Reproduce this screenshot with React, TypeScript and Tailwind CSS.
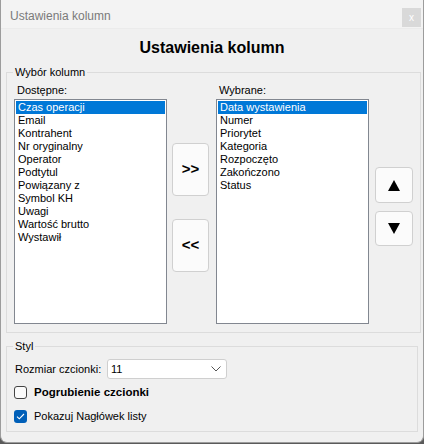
import React from "react";

const available = [
  "Czas operacji",
  "Email",
  "Kontrahent",
  "Nr oryginalny",
  "Operator",
  "Podtytul",
  "Powiązany z",
  "Symbol KH",
  "Uwagi",
  "Wartość brutto",
  "Wystawił",
];

const chosen = [
  "Data wystawienia",
  "Numer",
  "Priorytet",
  "Kategoria",
  "Rozpoczęto",
  "Zakończono",
  "Status",
];

function ListBox({ items }: { items: string[] }) {
  return (
    <div className="w-[153px] h-[225px] border border-[#828790] bg-white p-[1px]">
      {items.map((it, i) => (
        <div
          key={it}
          className={
            i === 0
              ? "h-[13px] leading-[13px] text-[11px] pl-[2px] bg-[#0078d7] text-white whitespace-nowrap"
              : "h-[13px] leading-[13px] text-[11px] pl-[2px] text-black whitespace-nowrap"
          }
        >
          {it}
        </div>
      ))}
    </div>
  );
}

export default function App() {
  return (
    <div className="w-[424px] h-[444px] bg-[#5a5a5a] font-['Liberation_Sans',Arial,sans-serif]">
      <div className="w-[424px] h-[443px] bg-[#f0f0f0] border-x border-b border-[#9c9c9c] rounded-b-[7px] flex flex-col overflow-hidden">
        {/* Title bar */}
        <div className="h-[29px] bg-[#f3f3f3] flex justify-between pl-[9px] pr-[2px] border-b border-[#ebebeb]">
          <span className="text-[12px] leading-[14px] mt-[9px] text-[#7a7a7a]">Ustawienia kolumn</span>
          <div className="mt-[8px] w-[19px] h-[19px] bg-[#d9d9d9] flex items-center justify-center text-white text-[10px] leading-none">
            x
          </div>
        </div>

        {/* Header */}
        <div className="h-[37px] flex items-center justify-center">
          <span className="text-[16px] font-bold text-black">Ustawienia kolumn</span>
        </div>

        {/* Group: Wybór kolumn */}
        <fieldset className="mx-[5px] border border-[#dcdcdc] px-[7px] pb-[8px]">
          <legend className="ml-[-1px] px-[2px] text-[11px] leading-[13px] text-black">Wybór kolumn</legend>
          <div className="flex mt-[5px]">
            <div className="flex flex-col gap-[2px]">
              <span className="text-[11px] leading-[13px] pl-[3px] text-black">Dostępne:</span>
              <ListBox items={available} />
            </div>
            <div className="ml-[5px] w-[37px] flex flex-col gap-[23px] pt-[59px]">
              <button className="h-[53px] w-[37px] rounded-[4px] border border-[#d0d0d0] bg-[#fbfbfb] text-[15px] font-bold text-black">
                &gt;&gt;
              </button>
              <button className="h-[53px] w-[37px] rounded-[4px] border border-[#d0d0d0] bg-[#fbfbfb] text-[15px] font-bold text-black">
                &lt;&lt;
              </button>
            </div>
            <div className="ml-[7px] flex flex-col gap-[2px]">
              <span className="text-[11px] leading-[13px] pl-[3px] text-black">Wybrane:</span>
              <ListBox items={chosen} />
            </div>
            <div className="ml-[6px] w-[38px] flex flex-col gap-[8px] pt-[83px]">
              <button className="h-[36px] w-[38px] rounded-[4px] border border-[#d0d0d0] bg-[#fbfbfb] flex items-center justify-center">
                <svg width="12" height="11" viewBox="0 0 12 11">
                  <path d="M6 0 L12 11 L0 11 Z" fill="black" />
                </svg>
              </button>
              <button className="h-[35px] w-[38px] rounded-[4px] border border-[#d0d0d0] bg-[#fbfbfb] flex items-center justify-center">
                <svg width="12" height="11" viewBox="0 0 12 11">
                  <path d="M0 0 L12 0 L6 11 Z" fill="black" />
                </svg>
              </button>
            </div>
          </div>
        </fieldset>

        {/* Group: Styl */}
        <fieldset className="mx-[5px] mt-[7px] border border-[#dcdcdc] px-[7px] pb-[8px]">
          <legend className="ml-[-1px] px-[2px] text-[11px] leading-[13px] text-black">Styl</legend>
          <div className="flex items-center mt-[6px] pl-[1px]">
            <span className="text-[11px] text-black w-[92px]">Rozmiar czcionki:</span>
            <div className="w-[120px] h-[20px] bg-white border border-[#cfcfcf] rounded-[3px] flex items-center justify-between pl-[3px] pr-[5px]">
              <span className="text-[11px] text-black">11</span>
              <svg width="10" height="6" viewBox="0 0 10 6" fill="none">
                <path d="M0.5 0.5 L5 5 L9.5 0.5" stroke="#555" strokeWidth="1" />
              </svg>
            </div>
          </div>
          <div className="flex items-center mt-[7px] h-[13px]">
            <div className="w-[13px] h-[13px] rounded-[3px] border border-[#444] bg-[#fbfbfb]" />
            <span className="ml-[7px] text-[11.5px] font-bold text-black">Pogrubienie czcionki</span>
          </div>
          <div className="flex items-center mt-[11px] h-[13px]">
            <div className="w-[13px] h-[13px] rounded-[3px] bg-[#005fb8] flex items-center justify-center">
              <svg width="9" height="7" viewBox="0 0 9 7" fill="none">
                <path d="M1 3.6 L3.3 5.8 L8 1" stroke="white" strokeWidth="1.1" />
              </svg>
            </div>
            <span className="ml-[7px] text-[11px] text-black">Pokazuj Nagłówek listy</span>
          </div>
        </fieldset>
      </div>
    </div>
  );
}
